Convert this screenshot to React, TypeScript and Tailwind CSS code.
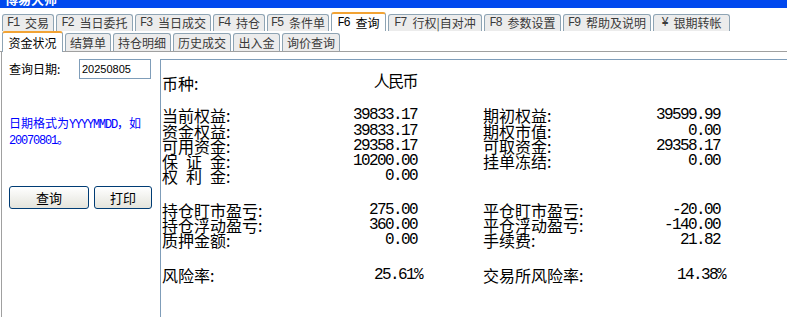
import React from "react";

const cjk = "font-['Noto_Sans_CJK_SC',sans-serif]";
const mono = "font-['Liberation_Mono','Noto_Sans_CJK_SC',monospace] tracking-[-0.1em]";

type TabDef = { w: string; pre?: string; label: string; active?: boolean };

const topTabs: TabDef[] = [
  { w: "w-[52px]", pre: "F1", label: "交易" },
  { w: "w-[77px]", pre: "F2", label: "当日委托" },
  { w: "w-[76px]", pre: "F3", label: "当日成交" },
  { w: "w-[52px]", pre: "F4", label: "持仓" },
  { w: "w-[62px]", pre: "F5", label: "条件单" },
  { w: "w-[55px]", pre: "F6", label: "查询", active: true },
  { w: "w-[94px]", pre: "F7", label: "行权|自对冲" },
  { w: "w-[77px]", pre: "F8", label: "参数设置" },
  { w: "w-[88px]", pre: "F9", label: "帮助及说明" },
  { w: "w-[77px]", pre: "¥", label: "银期转帐" },
];

const subTabs: TabDef[] = [
  { w: "w-[61px]", label: "资金状况", active: true },
  { w: "w-[46px]", label: "结算单" },
  { w: "w-[58px]", label: "持仓明细" },
  { w: "w-[58px]", label: "历史成交" },
  { w: "w-[47px]", label: "出入金" },
  { w: "w-[58px]", label: "询价查询" },
];

function TopTab({ t }: { t: TabDef }) {
  if (t.active) {
    return (
      <div
        className={`${t.w} h-[19px] flex items-center justify-center bg-white border-x border-t-2 border-x-[#8ea4b4] border-t-[#f2a334] rounded-t-[3px] text-[12px] text-black ${cjk}`}
      >
        <span className={mono}>{t.pre}&nbsp;</span>
        <span>{t.label}</span>
      </div>
    );
  }
  return (
    <div
      className={`${t.w} h-[17px] flex items-center justify-center bg-[#ececec] border-x border-t border-[#8ea4b4] rounded-t-[3px] text-[12px] text-[#3a3a3a] ${cjk}`}
    >
      <span className={mono}>{t.pre}&nbsp;</span>
      <span>{t.label}</span>
    </div>
  );
}

function SubTab({ t }: { t: TabDef }) {
  if (t.active) {
    return (
      <div
        className={`${t.w} h-[21px] -mb-px relative flex items-center justify-center bg-white border-x border-t-2 border-x-[#8ea4b4] border-t-[#f2a334] rounded-t-[3px] text-[12px] text-black ${cjk}`}
      >
        {t.label}
      </div>
    );
  }
  return (
    <div
      className={`${t.w} h-[18px] flex items-center justify-center bg-[#ececec] border-x border-t border-[#8ea4b4] rounded-t-[3px] text-[12px] text-[#3a3a3a] ${cjk}`}
    >
      {t.label}
    </div>
  );
}

function Label({ text }: { text: string }) {
  return (
    <span className={`${cjk} flex`}>
      {text.split("").map((c, i) =>
        c === " " ? (
          <span key={i} className="inline-block w-[8px]" />
        ) : (
          <span key={i}>{c}</span>
        )
      )}
    </span>
  );
}

function Cell({ label, value, pct }: { label: string; value: string; pct?: boolean }) {
  return (
    <div className="flex justify-between items-center h-[15.3px]">
      <Label text={label} />
      <span className={`${mono} ${pct ? "-mr-[5px]" : ""}`}>{value}</span>
    </div>
  );
}

function Row({
  l,
  r,
}: {
  l?: [string, string, boolean?];
  r?: [string, string, boolean?];
}) {
  return (
    <div className="flex">
      <div className="w-[255px]">
        {l ? <Cell label={l[0]} value={l[1]} pct={l[2]} /> : <div className="h-[15.3px]" />}
      </div>
      <div className="w-[66px]" />
      <div className="w-[237px]">
        {r ? <Cell label={r[0]} value={r[1]} pct={r[2]} /> : <div className="h-[15.3px]" />}
      </div>
    </div>
  );
}

export default function App() {
  return (
    <div className="w-[787px] h-[317px] bg-white overflow-hidden flex flex-col">
      {/* title bar */}
      <div className="h-[8px] bg-[#0048ee] overflow-hidden shrink-0">
        <div className={`pl-[5px] -mt-[8px] text-[13px] leading-[14px] font-bold text-white ${cjk}`}>
          博易大师
        </div>
      </div>

      {/* top tabs */}
      <div className="mt-[4px] h-[19px] flex items-end gap-[2px] pl-[2px] shrink-0">
        {topTabs.map((t, i) => (
          <TopTab key={i} t={t} />
        ))}
      </div>

      {/* sub tabs */}
      <div className="h-[21px] flex items-end gap-[2px] pl-[2px] border-b border-[#a0a0a0] shrink-0">
        {subTabs.map((t, i) => (
          <SubTab key={i} t={t} />
        ))}
      </div>

      {/* body */}
      <div className="flex flex-1 min-h-0 pl-[1px]">
        {/* left panel */}
        <div className="w-[159px] border-l border-[#a0a0a0] pl-[7px] flex flex-col">
          <div className="mt-[7px] flex items-center h-[20px]">
            <span className={`w-[70px] text-[12px] text-black ${cjk}`}>查询日期:</span>
            <div className="w-[72px] h-[20px] border border-[#7f9db9] flex items-center pl-[2px] text-[11px] text-black font-['Liberation_Sans',sans-serif]">
              20250805
            </div>
          </div>
          <div className={`mt-[37px] text-[12px] leading-[13px] text-[#0000ff] ${cjk}`}>
            <div>
              日期格式为<span className={mono}>YYYYMMDD</span>，如
            </div>
            <div>
              <span className={mono}>20070801</span>。
            </div>
          </div>
          <div className="mt-[38px] flex gap-[5px]">
            <button
              className={`w-[80px] h-[23px] rounded-[3px] border border-[#003c74] bg-linear-to-b from-white to-[#e4e4dc] text-[13px] text-black ${cjk} flex items-center justify-center`}
            >
              查询
            </button>
            <button
              className={`w-[58px] h-[23px] rounded-[3px] border border-[#003c74] bg-linear-to-b from-white to-[#e4e4dc] text-[13px] text-black ${cjk} flex items-center justify-center`}
            >
              打印
            </button>
          </div>
        </div>

        {/* main panel */}
        <div className="flex-1 mt-[7px] border-l border-t border-[#7f9db9] pl-[1px] text-[16px] leading-[15.3px] text-black">
          <div className="pt-[16px]">
            <Row l={["币种:", "人民币"]} />
          </div>
          <div className="mt-[17px]">
            <Row l={["当前权益:", "39833.17"]} r={["期初权益:", "39599.99"]} />
            <Row l={["资金权益:", "39833.17"]} r={["期权市值:", "0.00"]} />
            <Row l={["可用资金:", "29358.17"]} r={["可取资金:", "29358.17"]} />
            <Row l={["保 证 金:", "10200.00"]} r={["挂单冻结:", "0.00"]} />
            <Row l={["权 利 金:", "0.00"]} />
          </div>
          <div className="mt-[18px]">
            <Row l={["持仓盯市盈亏:", "275.00"]} r={["平仓盯市盈亏:", "-20.00"]} />
            <Row l={["持仓浮动盈亏:", "360.00"]} r={["平仓浮动盈亏:", "-140.00"]} />
            <Row l={["质押金额:", "0.00"]} r={["手续费:", "21.82"]} />
          </div>
          <div className="mt-[19px]">
            <Row l={["风险率:", "25.61%", true]} r={["交易所风险率:", "14.38%", true]} />
          </div>
        </div>
      </div>
    </div>
  );
}
